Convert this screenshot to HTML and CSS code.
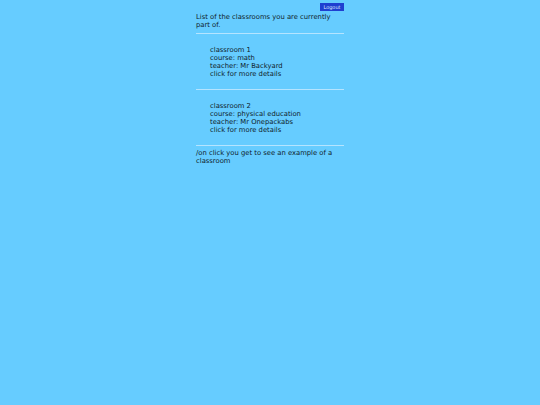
FILE: index.html
```html
<!DOCTYPE html>
<html>
<head>
<meta charset="utf-8">
<link rel="stylesheet" href="styles.css">
</head>
<body>
<div class="page">
  <div class="top"><button class="logout">Logout</button></div>
  <p class="intro">List of the classrooms you are currently part of.</p>
  <hr class="sep">
  <div class="room">
    <div>classroom 1</div>
    <div>course: math</div>
    <div>teacher: Mr Backyard</div>
    <div>click for more details</div>
  </div>
  <hr class="sep">
  <div class="room">
    <div>classroom 2</div>
    <div>course: physical education</div>
    <div>teacher: Mr Onepackabs</div>
    <div>click for more details</div>
  </div>
  <hr class="sep">
  <p class="note">/on click you get to see an example of a classroom</p>
</div>
</body>
</html>
```
FILE: styles.css
```css
html, body {
  margin: 0;
  padding: 0;
  background: #66ccff;
}
body {
  font-family: "DejaVu Sans", Verdana, sans-serif;
  font-size: 6.8px;
  line-height: 8px;
  color: #0f1c2a;
  min-height: 405px;
}
.page {
  width: 148px;
  margin: 0 auto;
  padding-top: 3px;
}
.top {
  display: flex;
  justify-content: flex-end;
}
.logout {
  width: 24px;
  height: 8px;
  padding: 0;
  margin: 0;
  border: none;
  background: #1f3fd0;
  color: #d5e4ff;
  font-family: "DejaVu Sans", Verdana, sans-serif;
  font-size: 5px;
  line-height: 8px;
}
.intro {
  margin: 2px 0 0 0;
}
.sep {
  border: 0;
  height: 1px;
  background: #b5e4ff;
  margin: 4px 0 0 0;
}
.room {
  padding: 12px 0 7px 14px;
}
.note {
  margin: 3px 0 0 0;
}
```
